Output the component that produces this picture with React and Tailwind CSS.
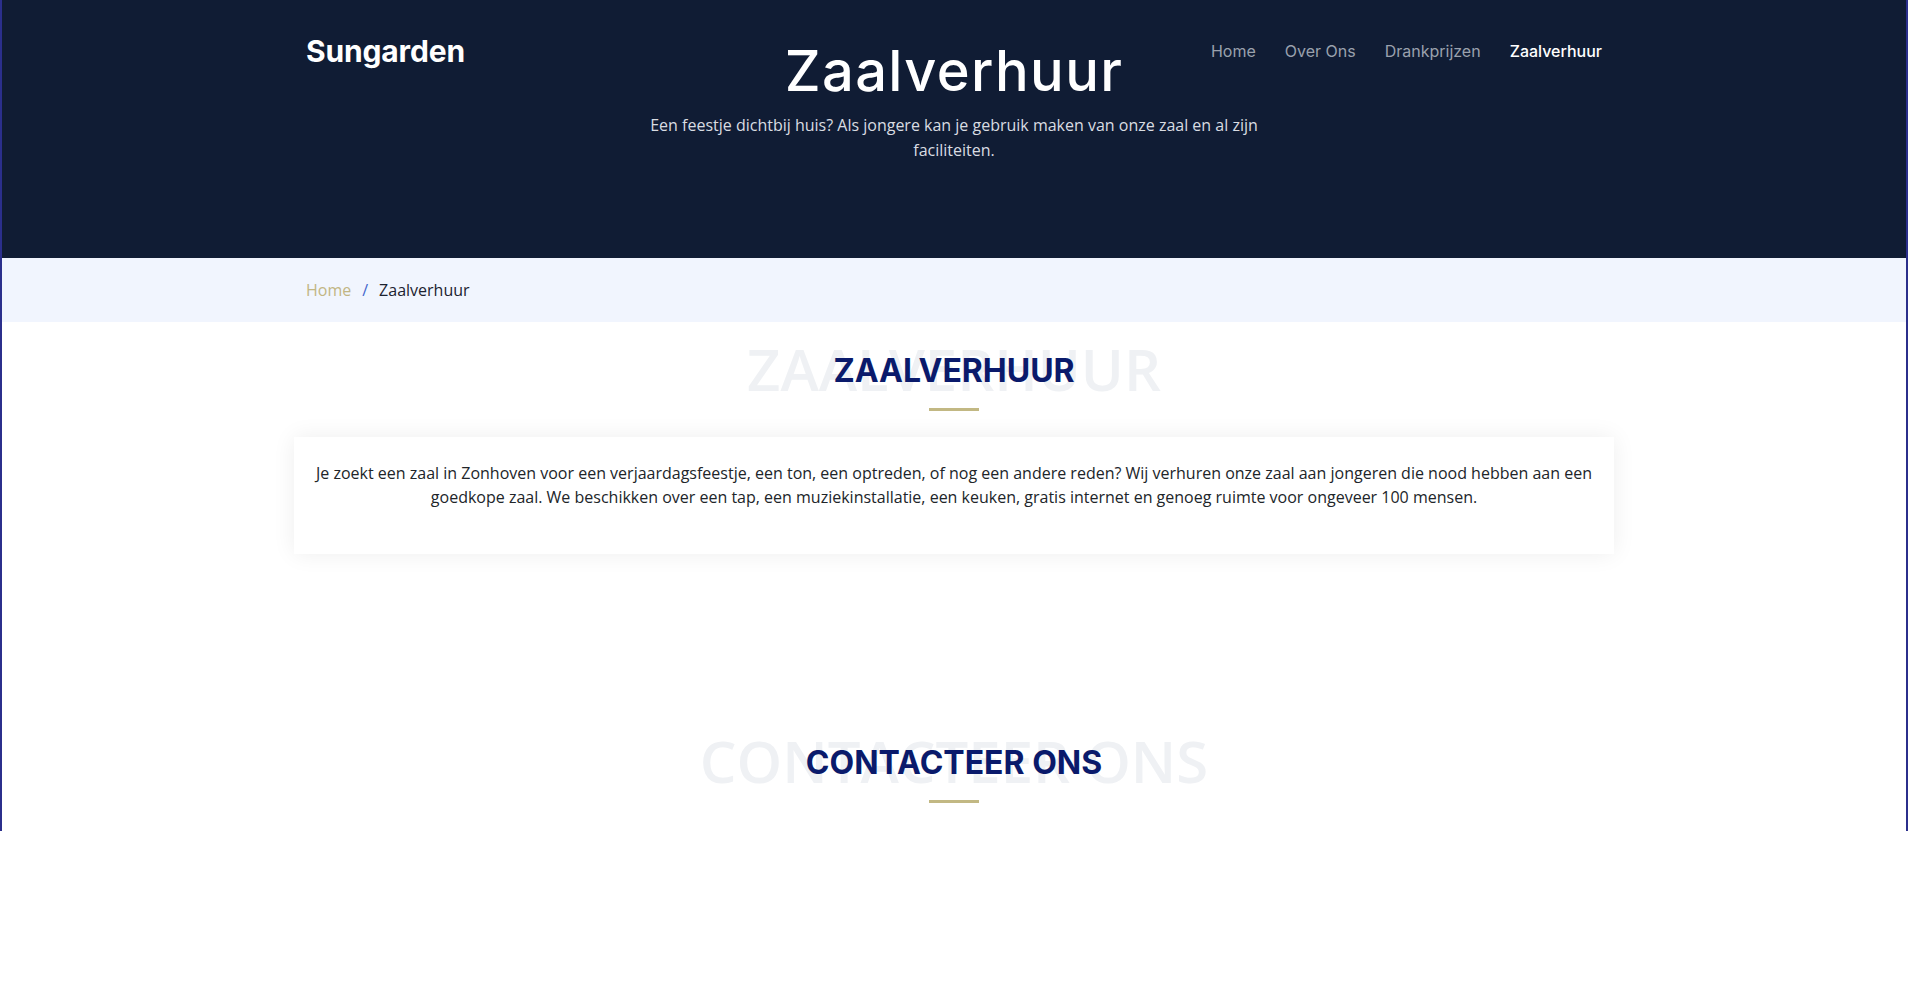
import React from 'react';

const links = ['Home', 'Over Ons', 'Drankprijzen', 'Zaalverhuur'];

// Section title with the big pale word behind it
const SectionTitle = ({ text }) => (
  <div className="flex flex-col items-center">
    <div className="relative flex justify-center">
      <span className="text-[58px] leading-none font-semibold text-[#eff1f4] font-['Open_Sans',sans-serif] whitespace-nowrap select-none">
        {text}
      </span>
      <h2 className="absolute inset-0 flex items-center justify-center pt-[4px] text-[32px] leading-none font-bold text-[#0a1a6b] font-['Inter',sans-serif] whitespace-nowrap">
        {text}
      </h2>
    </div>
    <div className="mt-[10px] h-[3px] w-[50px] bg-[#c2b883]"></div>
  </div>
);

const App = () => {
  return (
    <div className="min-h-screen bg-white">
      <div className="h-[831px] overflow-hidden border-x-2 border-[#2b2f8c] bg-white font-['Open_Sans',sans-serif]">
        {/* Hero */}
        <header className="relative h-[258px] bg-[#101c34]">
          <nav className="absolute inset-x-0 top-0">
            <div className="mx-auto flex h-[102px] w-[1296px] items-center justify-between">
              <a className="text-[30px] font-bold text-white font-['Inter',sans-serif] tracking-[-0.005em]">Sungarden</a>
              <ul className="flex items-center gap-[29px] font-['Inter',sans-serif] text-[16px]">
                {links.map((l) => (
                  <li
                    key={l}
                    className={l === 'Zaalverhuur' ? 'text-white font-medium' : 'text-[#9aa1ad]'}
                  >
                    {l}
                  </li>
                ))}
              </ul>
            </div>
          </nav>
          <div className="flex flex-col items-center pt-[38px]">
            <h1 className="text-[56px] leading-[1.2] font-medium text-white font-['Inter',sans-serif] tracking-[0.025em]">
              Zaalverhuur
            </h1>
            <p className="mt-[8px] w-[624px] text-center text-[16px] leading-[25px] text-[#d9dce2]">
              Een feestje dichtbij huis? Als jongere kan je gebruik maken van onze zaal en al zijn faciliteiten.
            </p>
          </div>
        </header>

        {/* Breadcrumb */}
        <div className="bg-[#f1f5fe]">
          <div className="mx-auto flex h-[64px] w-[1296px] items-center text-[16px]">
            <span className="font-medium text-[#c2b684]">Home</span>
            <span className="px-[11px] text-[#4466cc]">/</span>
            <span className="text-[#1c2230]">Zaalverhuur</span>
          </div>
        </div>

        {/* Zaalverhuur */}
        <section className="pt-[18px]">
          <SectionTitle text="ZAALVERHUUR" />
          <div className="mx-auto mt-[26px] w-[1320px] bg-white px-4 pt-6 pb-[45px] shadow-[0_0_22px_rgba(0,0,0,0.07)]">
            <p className="text-center text-[16px] leading-[24px] text-[#212529]">
              Je zoekt een zaal in Zonhoven voor een verjaardagsfeestje, een ton, een optreden, of nog een andere reden? Wij verhuren onze zaal aan jongeren die nood hebben aan een goedkope zaal. We beschikken over een tap, een muziekinstallatie, een keuken, gratis internet en genoeg ruimte voor ongeveer 100 mensen.
            </p>
          </div>
        </section>

        {/* Contact */}
        <section className="pt-[178px]">
          <SectionTitle text="CONTACTEER ONS" />
        </section>
      </div>
    </div>
  );
};

export default App;
